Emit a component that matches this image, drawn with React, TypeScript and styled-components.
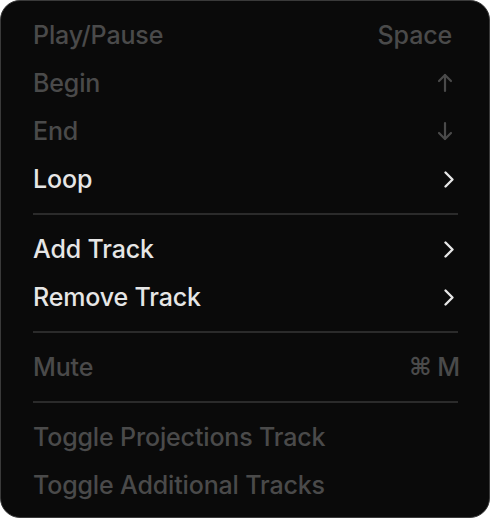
import React from 'react';
import styled, { createGlobalStyle } from 'styled-components';

const GlobalStyle = createGlobalStyle`
  html, body {
    margin: 0;
    padding: 0;
    background: #ffffff;
  }
  body {
    font-family: Inter, "Noto Sans", "DejaVu Sans", sans-serif;
  }
`;

const Menu = styled.div`
  box-sizing: border-box;
  width: 490px;
  height: 518px;
  background: #0a0a0a;
  border: 1px solid #3a3a3a;
  border-radius: 20px;
  padding: 10px 0 8px;
  display: flex;
  flex-direction: column;
  overflow: hidden;
`;

const Item = styled.div<{ $disabled?: boolean }>`
  height: 48px;
  flex-shrink: 0;
  display: flex;
  align-items: center;
  justify-content: space-between;
  padding: 0 29px 0 32px;
  font-size: 25px;
  font-weight: 500;
  letter-spacing: -0.15px;
  color: ${p => (p.$disabled ? '#4a4a4a' : '#e6e6e6')};
`;

const Label = styled.span`
  white-space: nowrap;
`;

const Shortcut = styled.span<{ $inset?: number }>`
  display: flex;
  align-items: center;
  gap: 6px;
  margin-right: ${p => p.$inset ?? 0}px;
`;

const CommandKey = styled.span`
  font-family: "DejaVu Sans", sans-serif;
  font-size: 24px;
  font-weight: 700;
`;

const Separator = styled.div`
  height: 2px;
  flex-shrink: 0;
  margin: 10px 31px 10px 32px;
  background: #2b2b2b;
`;

const Arrow = ({ down }: { down?: boolean }) => (
  <svg width="16" height="20" viewBox="0 0 16 20" fill="none" stroke="currentColor"
    strokeWidth="2.2" strokeLinecap="round" strokeLinejoin="round">
    {down ? (
      <>
        <path d="M8 2v16" />
        <path d="M2 12l6 6 6-6" />
      </>
    ) : (
      <>
        <path d="M8 18V2" />
        <path d="M2 8l6-6 6 6" />
      </>
    )}
  </svg>
);

const Chevron = () => (
  <svg width="12" height="19" viewBox="0 0 12 19" fill="none" stroke="currentColor"
    strokeWidth="2.4" strokeLinecap="round" strokeLinejoin="round">
    <path d="M2.5 2.5l7 7-7 7" />
  </svg>
);

const App: React.FC = () => (
  <>
    <GlobalStyle />
    <Menu>
      <Item $disabled>
        <Label>Play/Pause</Label>
        <Shortcut $inset={8}>Space</Shortcut>
      </Item>
      <Item $disabled>
        <Label>Begin</Label>
        <Shortcut $inset={7}><Arrow /></Shortcut>
      </Item>
      <Item $disabled>
        <Label>End</Label>
        <Shortcut $inset={7}><Arrow down /></Shortcut>
      </Item>
      <Item>
        <Label>Loop</Label>
        <Shortcut $inset={5}><Chevron /></Shortcut>
      </Item>
      <Separator />
      <Item>
        <Label>Add Track</Label>
        <Shortcut $inset={5}><Chevron /></Shortcut>
      </Item>
      <Item>
        <Label>Remove Track</Label>
        <Shortcut $inset={5}><Chevron /></Shortcut>
      </Item>
      <Separator />
      <Item $disabled>
        <Label>Mute</Label>
        <Shortcut><CommandKey>⌘</CommandKey>M</Shortcut>
      </Item>
      <Separator />
      <Item $disabled>
        <Label>Toggle Projections Track</Label>
      </Item>
      <Item $disabled>
        <Label>Toggle Additional Tracks</Label>
      </Item>
    </Menu>
  </>
);

export default App;
